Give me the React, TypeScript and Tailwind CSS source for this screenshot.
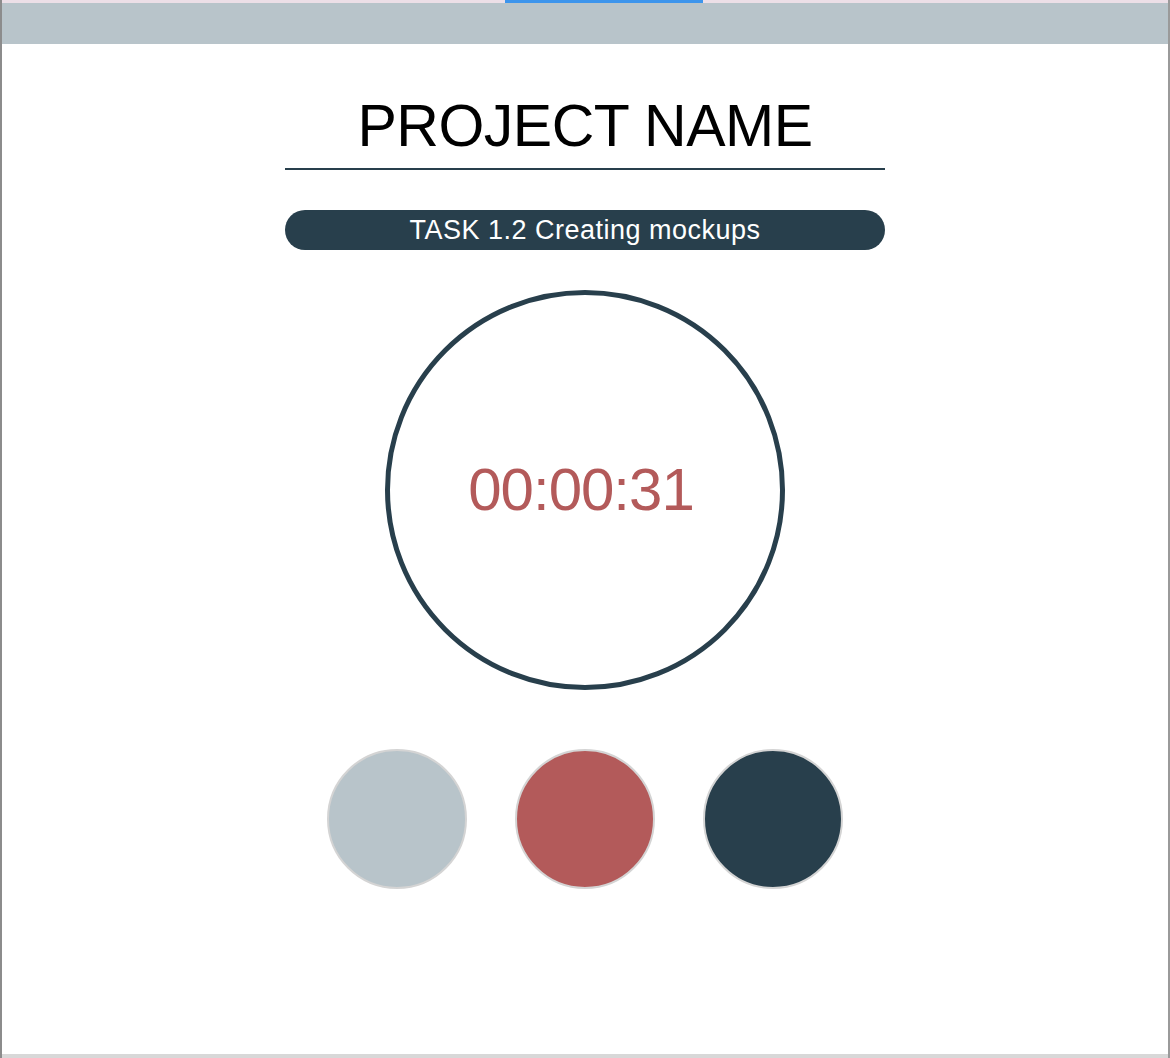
import React from 'react';

const font = { fontFamily: '"Liberation Sans", Arial, Helvetica, sans-serif' };

export default function App() {
  const swatches = ['bg-[#b8c4ca]', 'bg-[#b35a5a]', 'bg-[#283f4c]'];

  return (
    <div
      className="w-[1170px] h-[1058px] bg-white flex flex-col border-l-2 border-l-[#8c8c8c] border-r-2 border-r-[#9a9a9a] overflow-hidden"
      style={font}
    >
      {/* Window chrome */}
      <div className="h-[3px] bg-[#ecdfe7] flex">
        <div className="ml-[503px] w-[198px] h-full bg-[#3d95ec]" />
      </div>
      <div className="h-[41px] bg-[#b8c4ca]" />

      {/* Content */}
      <div className="flex-1 flex flex-col items-center">
        <h1 className="mt-[53px] text-[59px] leading-none tracking-[-0.5px] text-black">
          PROJECT NAME
        </h1>
        <div className="mt-[12px] w-[600px] h-[2px] bg-[#283f4c]" />

        <div className="mt-[40px] w-[600px] h-[40px] rounded-full bg-[#283f4c] flex items-center justify-center">
          <span className="text-[27px] leading-none tracking-[0.5px] text-white">TASK 1.2 Creating mockups</span>
        </div>

        <div className="mt-[40px] w-[400px] h-[400px] rounded-full border-[5px] border-[#283f4c] flex items-center justify-center">
          <span className="pr-[8px] text-[60px] leading-none tracking-[-1px] text-[#b35a5a]">00:00:31</span>
        </div>

        <div className="mt-[59px] flex gap-[48px]">
          {swatches.map(c => (
            <div key={c} className={`w-[140px] h-[140px] rounded-full border-2 border-[#d4d4d4] ${c}`} />
          ))}
        </div>
      </div>

      <div className="h-[4px] bg-[#d8d8d8]" />
    </div>
  );
}
